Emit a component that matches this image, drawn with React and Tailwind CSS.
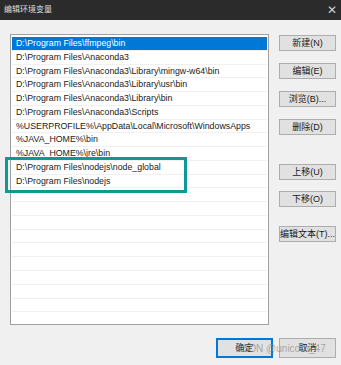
import React from "react";

const paths = [
  "D:\\Program Files\\ffmpeg\\bin",
  "D:\\Program Files\\Anaconda3",
  "D:\\Program Files\\Anaconda3\\Library\\mingw-w64\\bin",
  "D:\\Program Files\\Anaconda3\\Library\\usr\\bin",
  "D:\\Program Files\\Anaconda3\\Library\\bin",
  "D:\\Program Files\\Anaconda3\\Scripts",
  "%USERPROFILE%\\AppData\\Local\\Microsoft\\WindowsApps",
  "%JAVA_HOME%\\bin",
  "%JAVA_HOME%\\jre\\bin",
  "D:\\Program Files\\nodejs\\node_global",
  "D:\\Program Files\\nodejs",
  "",
  "",
  "",
  "",
  "",
  "",
  "",
  "",
  "",
  "",
];

const font = {
  fontFamily: '"Liberation Sans", "Noto Sans CJK SC", Arial, sans-serif',
};

const SideButton = ({ label, className = "" }) => (
  <button
    className={`h-[16px] w-[57px] bg-[#e1e1e1] border border-[#adadad] text-[9px] leading-none text-[#1a1a1a] flex items-center justify-center ${className}`}
  >
    {label}
  </button>
);

const App = () => {
  return (
    <div
      className="relative w-[341px] h-[365px] bg-[#f0f0f0] overflow-hidden"
      style={font}
    >
      {/* title bar */}
      <div className="h-[20px] bg-[#2b2b2b] flex items-center justify-between pl-[4px] pr-[4px]">
        <span className="text-[8px] text-[#dcdcdc] leading-none">编辑环境变量</span>
        <span className="text-[12px] text-[#d0d0d0] leading-none font-light">✕</span>
      </div>

      <div className="flex pl-[10px] pt-[14px] gap-[10px]">
        {/* list */}
        <div className="w-[259px] h-[291px] bg-white border border-[#a0a0a0] pt-[2px] px-[1px] overflow-hidden">
          {paths.map((p, i) => (
            <div
              key={i}
              className={`h-[13.77px] flex items-center pl-[4px] text-[8.8px] leading-none whitespace-nowrap border-b border-[#f0f0f0] ${
                i === 0 ? "bg-[#0078d7] text-white border-[#0078d7]" : "text-[#1a1a1a]"
              }`}
            >
              {p}
            </div>
          ))}
        </div>

        {/* side buttons */}
        <div className="flex flex-col pt-[1px]">
          <SideButton label="新建(N)" />
          <SideButton label="编辑(E)" className="mt-[12px]" />
          <SideButton label="浏览(B)..." className="mt-[12px]" />
          <SideButton label="删除(D)" className="mt-[12px]" />
          <SideButton label="上移(U)" className="mt-[29px]" />
          <SideButton label="下移(O)" className="mt-[11px]" />
          <SideButton label="编辑文本(T)..." className="mt-[19px]" />
        </div>
      </div>

      {/* bottom buttons */}
      <div className="flex justify-end gap-[6px] pr-[5px] mt-[13px]">
        <button className="h-[20px] w-[57px] bg-[#e1e1e1] border-2 border-[#0078d7] text-[9px] leading-none text-[#1a1a1a] flex items-center justify-center">
          确定
        </button>
        <button className="h-[20px] w-[57px] bg-[#e1e1e1] border border-[#adadad] text-[9px] leading-none text-[#1a1a1a] flex items-center justify-center">
          取消
        </button>
      </div>

      {/* annotation box */}
      <div className="absolute left-[5px] top-[157px] w-[182px] h-[36px] border-[3px] border-[#0e9a92]" />

      {/* watermark */}
      <div className="absolute left-[235px] top-[344px] text-[10px] leading-none text-[#8a8a8a]/70 pointer-events-none">
        CSDN @unicorn_47
      </div>
    </div>
  );
};

export default App;
